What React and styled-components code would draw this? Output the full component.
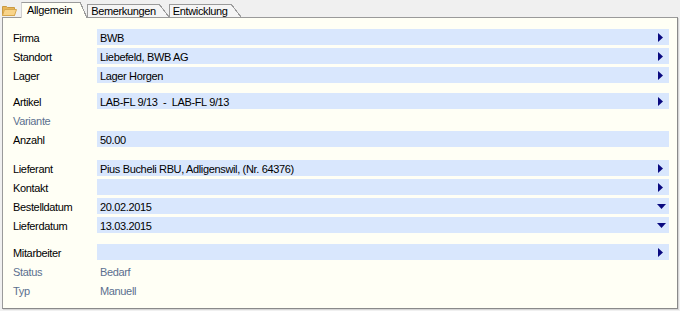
import React from "react";
import styled, { createGlobalStyle } from "styled-components";

const Global = createGlobalStyle`
  html, body { margin: 0; padding: 0; background: #f0f0f0; }
  body {
    font-family: "Liberation Sans", Arial, sans-serif;
    font-size: 11px;
    letter-spacing: -0.35px;
    color: #000;
  }
`;

const Page = styled.div`
  width: 680px;
  height: 311px;
  padding: 2px 0 0 2px;
  box-sizing: border-box;
  display: flex;
  flex-direction: column;
`;

const TabBar = styled.div`
  display: flex;
  align-items: flex-end;
  height: 15px;
  position: relative;
  z-index: 2;
`;

const FolderBox = styled.div`
  width: 19px;
  height: 15px;
  display: flex;
  align-items: flex-end;
  padding-bottom: 1px;
  box-sizing: border-box;
`;

const Tab = styled.div`
  position: relative;
  box-sizing: border-box;
  height: ${(p) => (p.$active ? "16px" : "13px")};
  margin-bottom: ${(p) => (p.$active ? "-1px" : "0")};
  padding: ${(p) => (p.$active ? "0 8px 0 5px" : "0 3px 0 3px")};
  margin-right: ${(p) => p.$slant}px;
  background: ${(p) => (p.$active ? "#fffff5" : "#f5f5f5")};
  border-top: 1px solid #9a9a9a;
  border-left: 1px solid ${(p) => (p.$active ? "#d0d0d0" : "#9a9a9a")};
  display: flex;
  align-items: ${(p) => (p.$active ? "flex-start" : "center")};
  line-height: 12px;
  white-space: nowrap;
  &::after {
    content: "";
    position: absolute;
    top: -1px;
    right: -${(p) => p.$slant}px;
    width: ${(p) => p.$slant}px;
    height: calc(100% + 1px);
    background: linear-gradient(
      to top right,
      ${(p) => (p.$active ? "#fffff5" : "#f5f5f5")} calc(50% - 0.6px),
      #9a9a9a calc(50% - 0.5px),
      #9a9a9a calc(50% + 0.5px),
      transparent calc(50% + 0.6px)
    );
  }
`;

const TabLabel = styled.span`
  padding-top: ${(p) => (p.$active ? "1px" : "0")};
`;

const Panel = styled.div`
  width: 676px;
  height: 292px;
  box-sizing: border-box;
  background: #fffff5;
  border: 1px solid #9a9a9a;
  border-right-color: #8a8a8a;
  border-bottom-color: #8a8a8a;
  box-shadow: 1px 1px 0 #d6d6d6;
  padding: 11px 8px 0 10px;
  display: flex;
  flex-direction: column;
`;

const Group = styled.div`
  display: flex;
  flex-direction: column;
  gap: 3px;
  margin-top: ${(p) => p.$gap || 0}px;
`;

const Row = styled.div`
  display: grid;
  grid-template-columns: 84px 1fr;
  height: 16px;
  align-items: center;
`;

const Label = styled.div`
  color: ${(p) => (p.$muted ? "#5b6f8f" : "#000")};
  padding-top: 1px;
`;

const Field = styled.div`
  height: 16px;
  box-sizing: border-box;
  background: ${(p) => (p.$plain ? "transparent" : "#d9e7fd")};
  color: ${(p) => (p.$muted ? "#5b6f8f" : "#000")};
  display: flex;
  align-items: center;
  justify-content: space-between;
  padding: 1px 6px 0 3px;
  white-space: pre;
`;

const Arrow = ({ dir }) =>
  dir === "down" ? (
    <svg width="9" height="5" viewBox="0 0 9 5" style={{ marginTop: -1, marginRight: -3 }}>
      <polygon points="0,0 9,0 4.5,5" fill="#0a0a80" />
    </svg>
  ) : (
    <svg width="5" height="9" viewBox="0 0 5 9" style={{ marginTop: -1 }}>
      <polygon points="0,0 5,4.5 0,9" fill="#0a0a80" />
    </svg>
  );

const Folder = () => (
  <svg width="15" height="11" viewBox="0 0 15 11">
    <path d="M0.5 1.5 h4 l1 1 h7 v8 h-12 z" fill="#e8b65a" stroke="#c99a45" />
    <path d="M0.5 10.5 l2 -6 h12 l-2 6 z" fill="#f8d48a" stroke="#d7a84f" />
  </svg>
);

const groups = [
  {
    gap: 0,
    rows: [
      { label: "Firma", value: "BWB", arrow: "right" },
      { label: "Standort", value: "Liebefeld, BWB AG", arrow: "right" },
      { label: "Lager", value: "Lager Horgen", arrow: "right" },
    ],
  },
  {
    gap: 10,
    rows: [
      { label: "Artikel", value: "LAB-FL 9/13  -  LAB-FL 9/13", arrow: "right" },
      { label: "Variante", value: "", muted: true, plain: true },
      { label: "Anzahl", value: "50.00" },
    ],
  },
  {
    gap: 13,
    rows: [
      { label: "Lieferant", value: "Pius Bucheli RBU, Adligenswil, (Nr. 64376)", arrow: "right" },
      { label: "Kontakt", value: "", arrow: "right" },
      { label: "Bestelldatum", value: "20.02.2015", arrow: "down" },
      { label: "Lieferdatum", value: "13.03.2015", arrow: "down" },
    ],
  },
  {
    gap: 11,
    rows: [
      { label: "Mitarbeiter", value: "", arrow: "right" },
      { label: "Status", value: "Bedarf", muted: true, plain: true },
      { label: "Typ", value: "Manuell", muted: true, plain: true },
    ],
  },
];

export default function App() {
  return (
    <>
      <Global />
      <Page>
        <TabBar>
          <FolderBox>
            <Folder />
          </FolderBox>
          <Tab $active $slant={7}>
            <TabLabel $active>Allgemein</TabLabel>
          </Tab>
          <Tab $slant={10}>
            <TabLabel>Bemerkungen</TabLabel>
          </Tab>
          <Tab $slant={10}>
            <TabLabel>Entwicklung</TabLabel>
          </Tab>
        </TabBar>
        <Panel>
          {groups.map((g, gi) => (
            <Group key={gi} $gap={g.gap}>
              {g.rows.map((r) => (
                <Row key={r.label}>
                  <Label $muted={r.muted}>{r.label}</Label>
                  <Field $plain={r.plain} $muted={r.muted}>
                    <span>{r.value}</span>
                    {r.arrow && <Arrow dir={r.arrow} />}
                  </Field>
                </Row>
              ))}
            </Group>
          ))}
        </Panel>
      </Page>
    </>
  );
}
